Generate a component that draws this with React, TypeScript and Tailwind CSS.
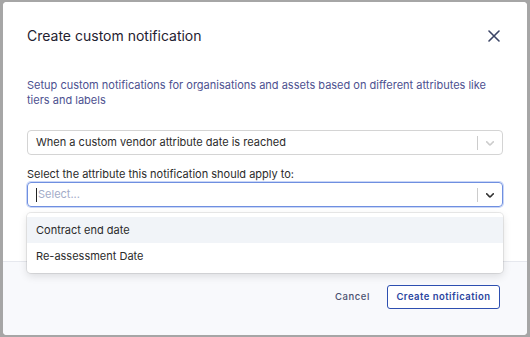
function Chevron({ dark }: { dark?: boolean }) {
  return (
    <svg
      className={dark ? 'w-[14px] h-[14px] text-[#333333]' : 'w-[14px] h-[14px] text-[#cccccc]'}
      viewBox="0 0 20 20"
      fill="currentColor"
    >
      <path d="M4.516 7.548c0.436-0.446 1.043-0.481 1.576 0l3.908 3.747 3.908-3.747c0.533-0.481 1.141-0.446 1.574 0 0.436 0.445 0.408 1.197 0 1.615-0.406 0.418-4.695 4.502-4.695 4.502-0.217 0.223-0.502 0.335-0.787 0.335s-0.57-0.112-0.789-0.335c0 0-4.287-4.084-4.695-4.502s-0.436-1.17 0-1.615z" />
    </svg>
  )
}

const options = ['Contract end date', 'Re-assessment Date']

export default function App() {
  return (
    <div
      className="w-[530px] h-[337px] bg-[#a6a6a6] pt-[2px] px-[3px] overflow-hidden"
      style={{ fontFamily: 'Inter, "Noto Sans", sans-serif' }}
    >
      <div className="w-[524px] h-[333px] bg-white rounded-[4px] flex flex-col overflow-hidden">
        <div className="px-6 pt-[24px] pb-[54px] bg-white">
          <div className="flex items-center justify-between h-5">
            <h2 className="text-[14px] leading-5 text-[#1f2230]">Create custom notification</h2>
            <svg className="w-[12px] h-[12px] mr-[3px] text-[#3b4566]" viewBox="0 0 12 12" fill="none" stroke="currentColor" strokeWidth={1.6} strokeLinecap="round">
              <path d="M1 1l10 10M11 1L1 11" />
            </svg>
          </div>

          <p className="mt-[32px] text-[11px] leading-[15px] text-[#4d5190]">
            <span className="whitespace-nowrap">
              Setup custom notifications for organisations and assets based on different attributes like
            </span>
            <br />
            tiers and labels
          </p>

          <div className="mt-[22px] h-[25px] border border-[#d4d4d4] rounded-[4px] flex items-center">
            <span className="flex-1 pl-[8px] text-[11px] text-[#2b2b2b]">
              When a custom vendor attribute date is reached
            </span>
            <span className="w-px h-[14px] bg-[#cccccc]" />
            <span className="px-[5px] flex items-center">
              <Chevron />
            </span>
          </div>

          <label className="block mt-[11px] text-[11px] leading-4 text-[#2b2b2b]">
            Select the attribute this notification should apply to:
          </label>

          <div className="relative">
            <div className="h-[25px] border border-[#6f8fe0] rounded-[4px] flex items-center shadow-[0_0_0_1px_#c9d6f7]">
              <span className="flex-1 pl-[8px] flex items-center text-[11px] text-[#a3acc8]">
                <span className="w-px h-[14px] bg-[#222] mr-[1px]" />
                Select...
              </span>
              <span className="w-px h-[14px] bg-[#cccccc]" />
              <span className="px-[5px] flex items-center">
                <Chevron dark />
              </span>
            </div>

            <div className="absolute left-0 right-0 top-[31px] z-10 bg-white rounded-[4px] py-[4px] shadow-[0_0_0_1px_rgba(0,0,0,0.08),0_3px_8px_rgba(0,0,0,0.12)]">
              {options.map((o, i) => (
                <div
                  key={o}
                  className={
                    i === 0
                      ? 'h-[26px] flex items-center pl-[9px] text-[11px] text-[#2b2b2b] bg-[#f1f4f8]'
                      : 'h-[26px] flex items-center pl-[9px] text-[11px] text-[#2b2b2b]'
                  }
                >
                  {o}
                </div>
              ))}
            </div>
          </div>
        </div>

        <div className="flex-1 bg-[#f8f9fc] border-t border-[#e6e8ee] flex items-start justify-end pt-[23px] pr-[27px] gap-[12px]">
          <button className="h-[24px] px-[5px] text-[9.5px] font-medium tracking-[0.06em] text-[#4a5070]">
            Cancel
          </button>
          <button className="h-[24px] w-[113px] border border-[#2d4fb0] rounded-[3px] text-[9.5px] font-semibold tracking-[0.05em] text-[#2a45a0] bg-white">
            Create notification
          </button>
        </div>
      </div>
    </div>
  )
}
